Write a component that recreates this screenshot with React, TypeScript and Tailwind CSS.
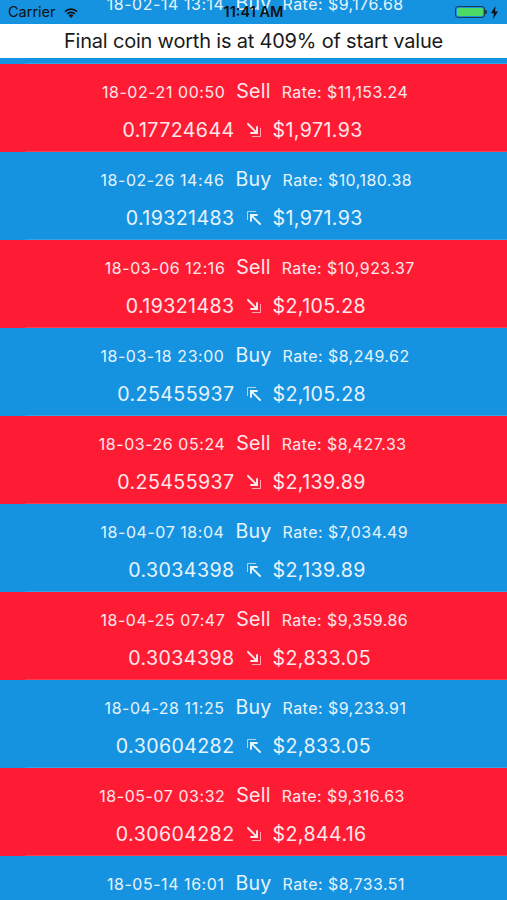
import React from "react";

type Row = {
  date: string;
  type: "Buy" | "Sell";
  rate: string;
  coins: string;
  usd: string;
};

const rows: Row[] = [
  { date: "18-02-14 13:14", type: "Buy", rate: "$9,176.68", coins: "0.17724644", usd: "$1,626.55" },
  { date: "18-02-21 00:50", type: "Sell", rate: "$11,153.24", coins: "0.17724644", usd: "$1,971.93" },
  { date: "18-02-26 14:46", type: "Buy", rate: "$10,180.38", coins: "0.19321483", usd: "$1,971.93" },
  { date: "18-03-06 12:16", type: "Sell", rate: "$10,923.37", coins: "0.19321483", usd: "$2,105.28" },
  { date: "18-03-18 23:00", type: "Buy", rate: "$8,249.62", coins: "0.25455937", usd: "$2,105.28" },
  { date: "18-03-26 05:24", type: "Sell", rate: "$8,427.33", coins: "0.25455937", usd: "$2,139.89" },
  { date: "18-04-07 18:04", type: "Buy", rate: "$7,034.49", coins: "0.3034398", usd: "$2,139.89" },
  { date: "18-04-25 07:47", type: "Sell", rate: "$9,359.86", coins: "0.3034398", usd: "$2,833.05" },
  { date: "18-04-28 11:25", type: "Buy", rate: "$9,233.91", coins: "0.30604282", usd: "$2,833.05" },
  { date: "18-05-07 03:32", type: "Sell", rate: "$9,316.63", coins: "0.30604282", usd: "$2,844.16" },
  { date: "18-05-14 16:01", type: "Buy", rate: "$8,733.51", coins: "0.32568193", usd: "$2,844.16" },
];

const font = { fontFamily: "Inter, 'Noto Sans', sans-serif" };

function ArrowIcon({ type }: { type: "Buy" | "Sell" }) {
  if (type === "Sell") {
    return (
      <svg width="16" height="16" viewBox="0 0 16 16" fill="none" className="self-center">
        <path d="M2 2 L11 11" stroke="currentColor" strokeWidth="1.9" strokeLinecap="round" />
        <path d="M11 5 L11 11 L5 11" stroke="currentColor" strokeWidth="1.9" strokeLinecap="round" strokeLinejoin="round" />
        <path d="M14.5 6 L14.5 14.5 L6 14.5" stroke="currentColor" strokeOpacity="0.7" strokeWidth="1" />
      </svg>
    );
  }
  return (
    <svg width="16" height="16" viewBox="0 0 16 16" fill="none" className="self-center">
      <path d="M14 14 L5 5" stroke="currentColor" strokeWidth="1.9" strokeLinecap="round" />
      <path d="M5 11 L5 5 L11 5" stroke="currentColor" strokeWidth="1.9" strokeLinecap="round" strokeLinejoin="round" />
      <path d="M1.5 10 L1.5 1.5 L10 1.5" stroke="currentColor" strokeOpacity="0.7" strokeWidth="1" />
    </svg>
  );
}

function TradeRow({ row }: { row: Row }) {
  const bg = row.type === "Sell" ? "bg-[#fe1c35]" : "bg-[#1592e0]";
  return (
    <div className={`${bg} h-[88px] flex flex-col text-white/90`}>
      <div className="pt-[15px] h-[39px] grid grid-cols-[1fr_auto_1fr] items-baseline gap-[11px] leading-[24px]">
        <span className="text-right text-[15.9px] tracking-[0.6px]">{row.date}</span>
        <span className="text-[19.6px] tracking-[0.2px]">{row.type}</span>
        <span className="text-left text-[15.9px] tracking-[0.5px]">Rate: {row.rate}</span>
      </div>
      <div className="mt-[14px] h-[26px] grid grid-cols-[1fr_auto_1fr] items-center gap-[11px] leading-[26px] text-[19.6px] tracking-[0.4px]">
        <span className="text-right">{row.coins}</span>
        <ArrowIcon type={row.type} />
        <span className="text-left">{row.usd}</span>
      </div>
      <div className="mt-auto ml-[25px] h-px bg-white/15" />
    </div>
  );
}

function Wifi() {
  return (
    <svg width="16" height="12" viewBox="0 0 16 12" fill="#111">
      <path d="M8 12 L5.6 9.4 A3.4 3.4 0 0 1 10.4 9.4 Z" />
      <path d="M3.6 7.3 A6.2 6.2 0 0 1 12.4 7.3 L11.2 8.6 A4.5 4.5 0 0 0 4.8 8.6 Z" />
      <path d="M1.4 5.0 A9.3 9.3 0 0 1 14.6 5.0 L13.4 6.3 A7.6 7.6 0 0 0 2.6 6.3 Z" />
    </svg>
  );
}

function Battery() {
  return (
    <div className="flex items-center">
      <div className="w-[30px] h-[12px] rounded-[3px] border border-[#1d3b52] p-[1px]">
        <div className="w-full h-full rounded-[1.5px] bg-[#4cd964]" />
      </div>
      <div className="w-[2px] h-[4px] rounded-r-[1px] bg-[#1d3b52]" />
      <svg width="9" height="13" viewBox="0 0 9 13" className="ml-[3px]" fill="#111">
        <path d="M5.5 0 L1 7.2 L4 7.2 L3 13 L8 5.4 L5 5.4 Z" />
      </svg>
    </div>
  );
}

export default function App() {
  return (
    <div className="relative w-[507px] h-[900px] overflow-hidden bg-[#1592e0]" style={font}>
      <div className="-mt-[24px]">
        {rows.map((r, i) => (
          <TradeRow key={i} row={r} />
        ))}
      </div>

      <div className="absolute top-0 left-0 right-0 h-[24px] grid grid-cols-3 items-center text-[14.5px] text-[#111]">
        <div className="flex items-center gap-[7px] pl-[8px]">
          <span>Carrier</span>
          <Wifi />
        </div>
        <div className="text-center font-semibold">11:41 AM</div>
        <div className="flex justify-end pr-[8px]">
          <Battery />
        </div>
      </div>

      <div className="absolute top-[24px] left-0 right-0 h-[34px] bg-white flex items-center justify-center text-[20px] tracking-[-0.2px] text-[#1a1a1a]">
        Final coin worth is at 409% of start value
      </div>
    </div>
  );
}
